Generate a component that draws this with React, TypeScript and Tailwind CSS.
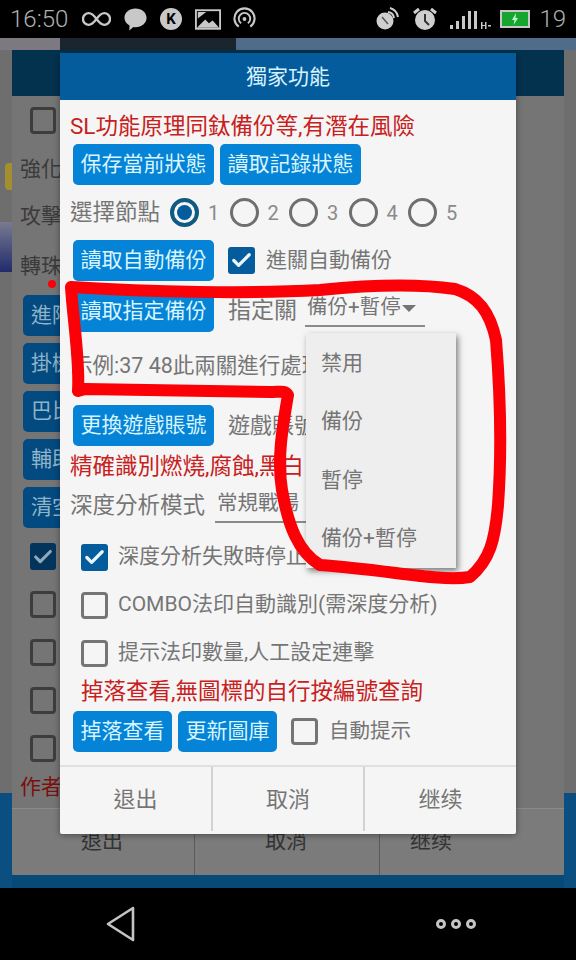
import { Check } from "lucide-react"

const font = { fontFamily: 'Roboto, "Noto Sans CJK TC", sans-serif' }

function Btn({ label, width = "w-[141px]" }: { label: string; width?: string }) {
  return (
    <button className={`${width} h-[41px] shrink-0 rounded-[5px] bg-[#0583d6] text-[21px] leading-[41px] text-[#d9f5ff] whitespace-nowrap`}>
      {label}
    </button>
  )
}

function Box({ checked = false }: { checked?: boolean }) {
  if (checked) {
    return (
      <span className="flex h-[27px] w-[27px] shrink-0 items-center justify-center rounded-[3px] bg-[#045c9c]">
        <Check size={23} strokeWidth={3.4} className="text-[#e8f6ff]" />
      </span>
    )
  }
  return <span className="block h-[27px] w-[27px] shrink-0 rounded-[4px] border-[3px] border-[#757575]" />
}

function Radio({ n, on = false }: { n: number; on?: boolean }) {
  return (
    <div className="flex w-[59.5px] shrink-0 items-center">
      {on ? (
        <span className="flex h-[29px] w-[29px] items-center justify-center rounded-full border-[4px] border-[#0f5a80]">
          <span className="h-[15px] w-[15px] rounded-full bg-[#045c9c]" />
        </span>
      ) : (
        <span className="h-[29px] w-[29px] rounded-full border-[3px] border-[#6f6f6f]" />
      )}
      <span className="ml-[9px] text-[20px] text-[#8a8a8a]">{n}</span>
    </div>
  )
}

function StatusBar() {
  return (
    <div className="flex h-[38px] items-center bg-black pl-[10px] pr-[10px] text-[#c9c9c9]">
      <span className="w-[62px] text-[24px] font-light leading-none text-[#b0b0b0]">16:50</span>
      <svg width="29" height="18" viewBox="0 0 30 18" className="ml-[10px]" fill="none" stroke="#c8c8c8" strokeWidth="2.4">
        <path d="M15 9c-3-4-5-6-8-6a6 6 0 0 0 0 12c3 0 5-2 8-6s5-6 8-6a6 6 0 0 1 0 12c-3 0-5-2-8-6z" />
      </svg>
      <svg width="25" height="26" viewBox="0 0 26 26" className="ml-[12px]" fill="#c8c8c8">
        <path d="M13 2c6.600 0 11.500 4.200 11.500 9.800S19.600 21.500 13 21.500c-.8 0-1.500 0-2.200-.2L6.500 25l.3-5.200C3.500 18 1.500 15.200 1.500 11.800 1.500 6.200 6.400 2 13 2z" />
      </svg>
      <span className="ml-[12px] flex h-[22px] w-[22px] items-center justify-center rounded-full bg-[#c8c8c8] text-[15px] font-bold leading-none text-black">K</span>
      <svg width="26" height="21" viewBox="0 0 28 22" className="ml-[13px]">
        <rect x="1" y="1" width="26" height="20" fill="none" stroke="#c8c8c8" strokeWidth="2" />
        <path d="M2 20l9-9 4 4 4-3 7 8z" fill="#c8c8c8" />
        <path d="M3 3h9L3 10z" fill="#c8c8c8" />
      </svg>
      <svg width="23" height="24" viewBox="0 0 24 24" className="ml-[12px]" fill="none" stroke="#c8c8c8">
        <path d="M6 20a10.500 10.500 0 1 1 12 0" strokeWidth="2.200" />
        <path d="M8.500 16.500a6 6 0 1 1 7 0" strokeWidth="2" />
        <circle cx="12" cy="12" r="2" fill="#c8c8c8" stroke="none" />
      </svg>

      <div className="ml-auto flex items-center">
        <svg width="24" height="26" viewBox="0 0 24 26" fill="none">
          <circle cx="9" cy="15" r="8.500" fill="#cfcfcf" />
          <path d="M6 11l6 7" stroke="#555" strokeWidth="1.500" />
          <path d="M12 6a7 7 0 0 1 6 6M14 2a11 11 0 0 1 8 9" stroke="#cfcfcf" strokeWidth="2" />
        </svg>
        <svg width="26" height="26" viewBox="0 0 26 26" className="ml-[12px]" fill="none">
          <circle cx="13" cy="14" r="10" fill="#cfcfcf" />
          <path d="M13 8v7l4 4" stroke="#333" strokeWidth="2" />
          <path d="M2 7l5-4M24 7l-5-4" stroke="#cfcfcf" strokeWidth="3" />
        </svg>
        <svg width="46" height="24" viewBox="0 0 44 24" className="ml-[10px]" fill="#c8c8c8">
          <rect x="1" y="18" width="3" height="4" />
          <rect x="7" y="14" width="3" height="8" />
          <rect x="13" y="9" width="3" height="13" />
          <rect x="19" y="4" width="3" height="18" />
          <rect x="25" y="4" width="3" height="18" />
          <path d="M32 15h1.500v3H36v-3h1.500v7H36v-3h-2.500v3H32zM39 18h3v1.500h-3z" />
        </svg>
        <div className="ml-[6px] flex h-[18px] w-[30px] items-center justify-center border-[2px] border-[#c8c8c8] bg-[#16a52f]">
          <svg width="8" height="12" viewBox="0 0 8 12" fill="#c8f5c8">
            <path d="M5 0L1 7h2.500L2.500 12 7 5H4.500z" />
          </svg>
        </div>
        <span className="ml-[9px] text-[24px] font-light leading-none text-[#b0b0b0]">19</span>
      </div>
    </div>
  )
}

function Backdrop() {
  const rows = ["進階", "掛機", "巴比", "輔助", "清空"]
  return (
    <div className="flex h-[850px] flex-col bg-[#6e6e6e]">
      <div className="flex h-[12px] shrink-0">
        <div className="w-[60px] bg-[#7c7a80]" />
        <div className="w-[176px] bg-[#1b2530]" />
        <div className="flex-1 bg-[#4f6d8a]" />
      </div>
      <div className="flex flex-1">
        <div className="flex w-[12px] flex-col">
          <div className="mt-[113px] h-[27px] w-[7px] self-end rounded-l bg-[#a48f2e]" />
          <div className="mt-[32px] h-[50px] bg-gradient-to-b from-[#7a7a90] to-[#232a6a]" />
          <div className="flex-1" />
          <div className="h-[95px] bg-[#0a4f80]" />
        </div>
        <div className="flex flex-1 flex-col">
          <div className="h-[46px] bg-[#03324f]" />
          <div className="flex h-[712px] flex-col bg-[#757575] pl-[8px] text-[21px] text-[#3a3a3a]">
            <span className="mt-[11px] ml-[10px] h-[27px] w-[26px] rounded-[4px] border-[3px] border-[#3d3d3d]" />
            <div className="mt-[19px] h-[32px] leading-[32px]">強化</div>
            <div className="mt-[15px] h-[32px] leading-[32px]">攻擊</div>
            <div className="mt-[18px] h-[32px] leading-[32px]">轉珠</div>
            <div className="mt-[13px] ml-[3px] flex flex-col gap-[7px]">
              {rows.map((r) => (
                <div key={r} className="h-[41px] w-[120px] rounded-[5px] bg-[#034a80] pl-[8px] leading-[41px] text-[#8fb4c8]">{r}</div>
              ))}
            </div>
            <div className="mt-[15px] flex flex-col gap-[21px] pl-[10px]">
              <span className="flex h-[27px] w-[26px] items-center justify-center rounded-[3px] bg-[#03355c]">
                <Check size={22} strokeWidth={3.400} className="text-[#93a9b8]" />
              </span>
              {[1, 2, 3, 4].map((i) => (
                <span key={i} className="h-[27px] w-[26px] rounded-[4px] border-[3px] border-[#3d3d3d]" />
              ))}
            </div>
            <div className="mt-[10px] leading-[30px] text-[#7c0f0f]">作者</div>
          </div>
          <div className="flex h-[67px] rounded-b-[3px] border-t border-[#8a8a8a] bg-[#7b7b7b] text-[21px] text-[#333]">
            <div className="w-[183px] border-r border-[#5a5a5a] pl-[69px] pt-[17px]">退出</div>
            <div className="w-[185px] border-r border-[#5a5a5a] pl-[70px] pt-[17px]">取消</div>
            <div className="flex-1 pl-[30px] pt-[17px]">继续</div>
          </div>
          <div className="h-[13px] bg-[#074a78]" />
        </div>
        <div className="flex w-[12px] flex-col">
          <div className="flex-1" />
          <div className="h-[95px] bg-[#0a4f80]" />
        </div>
      </div>
    </div>
  )
}

function Dropdown() {
  return (
    <div className="absolute left-[246px] top-[280px] flex h-[235px] w-[150px] flex-col bg-[#eeeeee] pl-[15px] pt-[1px] text-[21px] text-[#757575] shadow-[2px_3px_6px_rgba(0,0,0,0.5)]">
      {["禁用", "備份", "暫停", "備份+暫停"].map((m) => (
        <div key={m} className="flex h-[58.500px] shrink-0 items-center whitespace-nowrap">{m}</div>
      ))}
    </div>
  )
}

function Dialog() {
  return (
    <div className="absolute left-[60px] top-[53px] flex h-[781px] w-[456px] flex-col overflow-visible rounded-[2px] bg-[#f5f5f5] text-[21px] text-[#757575] shadow-[0_1px_6px_rgba(0,0,0,0.4)]">
      <div className="flex h-[47px] shrink-0 items-center justify-center bg-[#045c9c] pt-[2px] text-[21px] text-[#d6f2ff]">獨家功能</div>

      <div className="h-[44px] pl-[10px] pt-[11px] text-[22.500px] leading-[30px] text-[#c8201c]">SL功能原理同鈦備份等,有潛在風險</div>

      <div className="flex h-[41px] gap-[6px] pl-[13px]">
        <Btn label="保存當前狀態" />
        <Btn label="讀取記錄狀態" />
      </div>

      <div className="flex h-[55px] items-center pl-[10px]">
        <span className="w-[100px] shrink-0 text-[22.500px]">選擇節點</span>
        <Radio n={1} on />
        <Radio n={2} />
        <Radio n={3} />
        <Radio n={4} />
        <Radio n={5} />
      </div>

      <div className="flex h-[41px] items-center pl-[13px]">
        <Btn label="讀取自動備份" />
        <span className="ml-[14px] flex"><Box checked /></span>
        <span className="ml-[11px]">進關自動備份</span>
      </div>

      <div className="mt-[10px] flex h-[41px] items-center pl-[13px]">
        <Btn label="讀取指定備份" />
        <span className="ml-[14px] text-[23px]">指定關</span>
        <div className="ml-[8px] mt-[-6px] flex h-[36px] w-[120px] items-start border-b-2 border-[#8a8a8a] pl-[2px] text-[20.500px] leading-[33px]">
          備份+暫停
          <span className="ml-[1px] mt-[14px] h-0 w-0 border-x-[7px] border-t-[7px] border-x-transparent border-t-[#757575]" />
        </div>
      </div>

      <div className="flex h-[69px] items-center overflow-hidden whitespace-nowrap pl-[11px] text-[21.500px]">示例:37 48此兩關進行處理</div>

      <div className="mt-[4px] flex h-[41px] items-center pl-[13px]">
        <Btn label="更換遊戲賬號" />
        <span className="ml-[14px] text-[22px]">遊戲賬號</span>
      </div>

      <div className="flex h-[42px] items-center pl-[10px] text-[22.500px] text-[#c8201c]">精確識別燃燒,腐蝕,黑白</div>

      <div className="flex h-[36px] items-center pl-[10px] text-[22.500px]">
        深度分析模式
        <div className="ml-[10px] mt-[-2px] h-[35px] w-[100px] whitespace-nowrap border-b-2 border-[#8a8a8a] pl-[2px] text-[20.500px] leading-[30px]">常規戰場</div>
      </div>

      <div className="mt-[9px] flex h-[48px] items-center gap-[10px] pl-[21px]">
        <Box checked />
        <span>深度分析失敗時停止</span>
      </div>
      <div className="flex h-[48px] items-center gap-[10px] pl-[21px]">
        <Box />
        <span>COMBO法印自動識別(需深度分析)</span>
      </div>
      <div className="flex h-[48px] items-center gap-[10px] pl-[21px]">
        <Box />
        <span>提示法印數量,人工設定連擊</span>
      </div>

      <div className="flex h-[30px] items-center pl-[21px] text-[22.500px] text-[#c8201c]">掉落查看,無圖標的自行按編號查詢</div>

      <div className="mt-[3px] flex h-[42px] items-center pl-[13px]">
        <Btn label="掉落查看" width="w-[99px]" />
        <span className="ml-[6px] flex"><Btn label="更新圖庫" width="w-[99px]" /></span>
        <span className="ml-[14px] flex"><Box /></span>
        <span className="ml-[11px] text-[20.500px]">自動提示</span>
      </div>

      <div className="mt-[13px] flex h-[69px] border-t-2 border-[#e0e0e0] pb-[3px] text-[22px]">
        <div className="flex w-[153px] items-center justify-center border-r-2 border-[#d2d2d2]">退出</div>
        <div className="flex w-[152px] items-center justify-center border-r-2 border-[#d2d2d2]">取消</div>
        <div className="flex flex-1 items-center justify-center">继续</div>
      </div>

      <Dropdown />
    </div>
  )
}

function RedInk() {
  return (
    <svg width="576" height="960" viewBox="0 0 576 960" className="pointer-events-none absolute left-0 top-0" fill="none" stroke="#fb0006" strokeWidth="12" strokeLinecap="round" strokeLinejoin="round">
      <path d="M71 287C150 292 250 294 320 290C370 285 420 284 455 289C478 296 490 312 496 340C500 390 502 450 498 505C495 540 490 560 470 577C440 582 390 570 320 565C298 552 288 525 282 490C277 460 282 430 288 395C285 390 280 392 270 392L85 389L78 391C80 360 73 320 71 287Z" />
      <circle cx="52" cy="284" r="4" fill="#fb0006" stroke="none" />
    </svg>
  )
}

export default function App() {
  return (
    <div style={font} className="relative h-[960px] w-[576px] overflow-hidden bg-black">
      <StatusBar />
      <Backdrop />
      <div className="flex h-[72px] items-center bg-black">
        <svg width="32" height="36" viewBox="0 0 32 36" className="ml-[105px]" fill="none" stroke="#c4c4c4" strokeWidth="2.600" strokeLinejoin="round">
          <path d="M28 2L3 18l25 16z" />
        </svg>
        <div className="ml-[299px] flex gap-[5px]">
          <span className="h-[10px] w-[10px] rounded-full border-[3px] border-[#c4c4c4]" />
          <span className="h-[10px] w-[10px] rounded-full border-[3px] border-[#c4c4c4]" />
          <span className="h-[10px] w-[10px] rounded-full border-[3px] border-[#c4c4c4]" />
        </div>
      </div>
      <Dialog />
      <RedInk />
    </div>
  )
}
